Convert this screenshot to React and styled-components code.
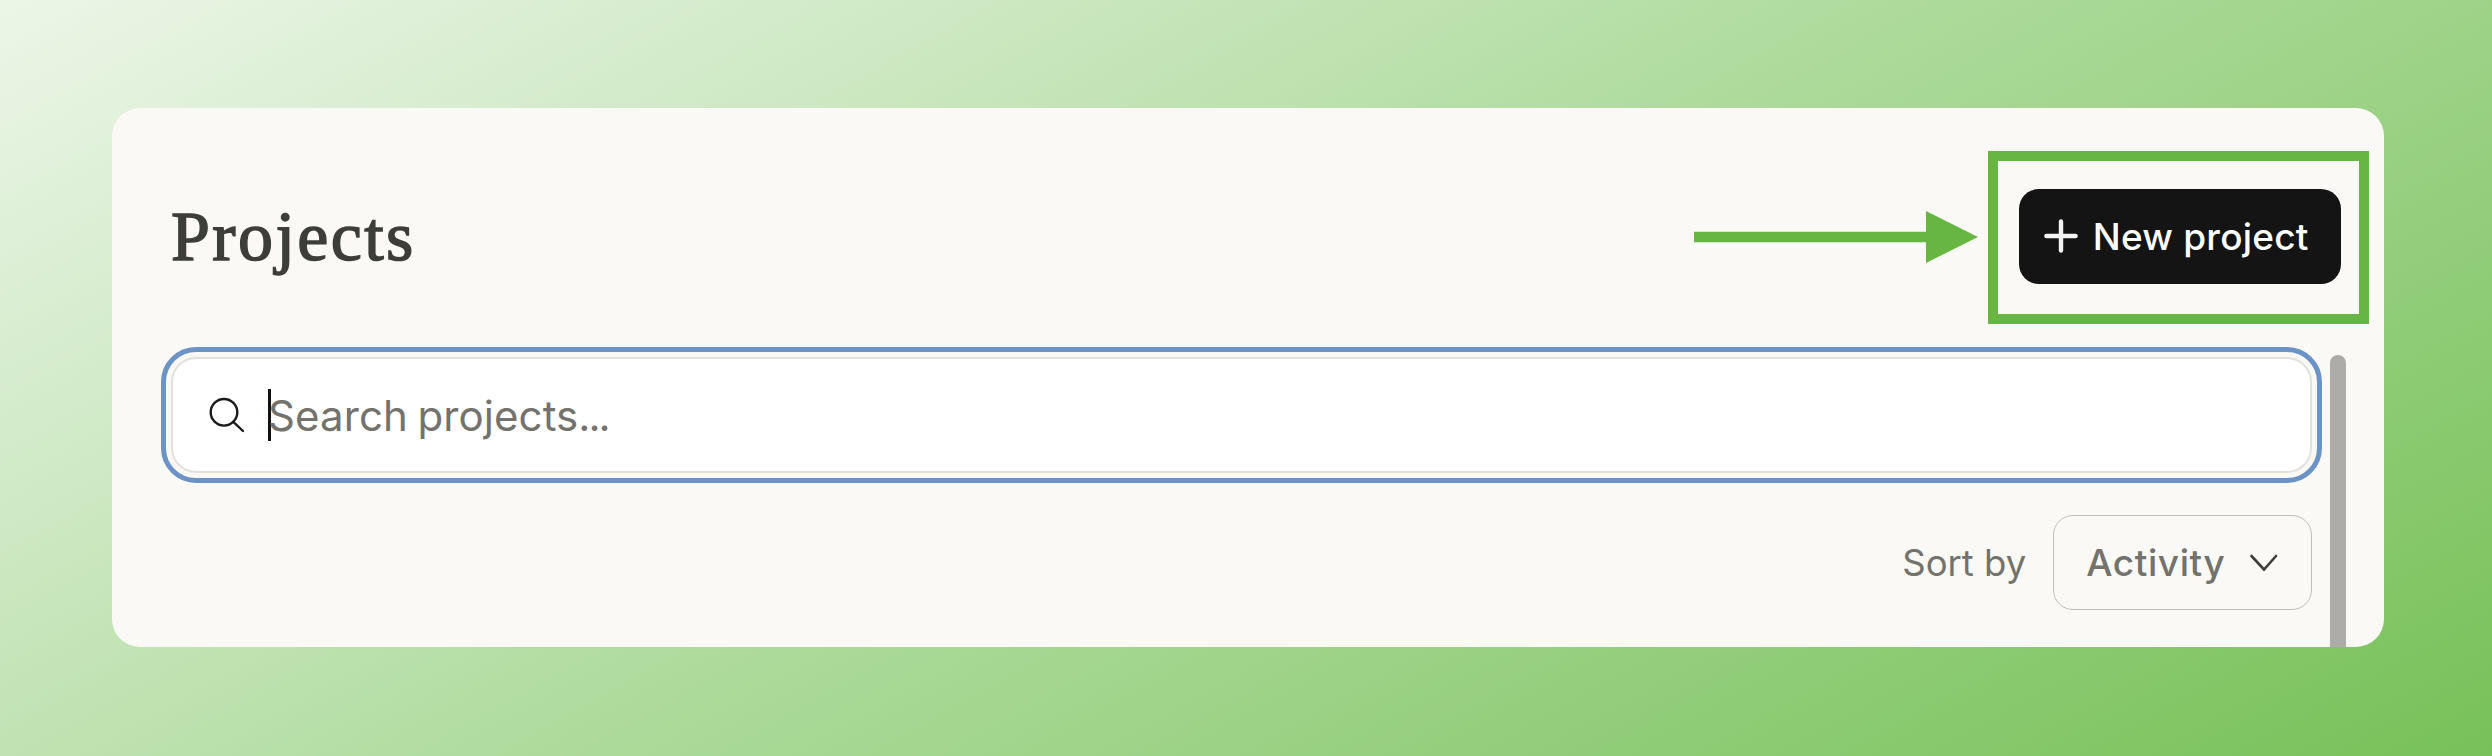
import React from 'react';
import styled, { createGlobalStyle } from 'styled-components';

const GlobalStyle = createGlobalStyle`
  * {
    box-sizing: border-box;
  }

  body {
    margin: 0;
    font-family: Inter, 'Liberation Sans', sans-serif;
  }
`;

const Backdrop = styled.div`
  width: 2492px;
  height: 756px;
  padding: 107.5px 108px 109.5px 112px;
  background: linear-gradient(151deg, #ecf6e8 0%, #cfe9c5 24%, #acda9a 51%, #78c159 100%);
`;

const Card = styled.main`
  position: relative;
  height: 539px;
  overflow: hidden;
  border-radius: 28px;
  background: #faf9f5;
`;

const Header = styled.header`
  display: flex;
  align-items: center;
  height: 173.5px;
  margin-top: 43px;
  padding-right: 14.7px;
  padding-left: 59px;
`;

const Title = styled.h1`
  flex: 1;
  margin: 0;
  color: #3d3d3a;
  font-family: 'Liberation Serif', serif;
  font-size: 70px;
  font-weight: 400;
  letter-spacing: 2.4px;
  line-height: 80px;
  -webkit-text-stroke: 1.5px #3d3d3a;
`;

const Arrow = styled.svg`
  display: block;
  width: 284px;
  height: 52px;
  margin-right: 10px;
`;

const Highlight = styled.div`
  display: flex;
  align-items: center;
  justify-content: center;
  width: 381.6px;
  height: 173.4px;
  padding: 0 0 2px 3px;
  border: 10.4px solid #67b643;
`;

const NewButton = styled.button`
  display: flex;
  align-items: center;
  width: 321.4px;
  height: 95px;
  padding: 0 0 0 25px;
  border: 0;
  border-radius: 20px;
  background: #141414;
  color: #fff;
  font-family: inherit;
  font-size: 37px;
  font-weight: 500;
  letter-spacing: 0.2px;
  white-space: nowrap;

  svg {
    margin-right: 14.5px;
  }
`;

const Body = styled.section`
  width: 2140.8px;
  margin-left: 59px;
  padding-top: 33px;
`;

const SearchField = styled.div`
  display: flex;
  align-items: center;
  height: 116px;
  padding-left: 36px;
  border: 2px solid #e2e1de;
  border-radius: 25px;
  outline: 5.4px solid #6b93c5;
  outline-offset: 5px;
  background: #fff;
`;

const Caret = styled.span`
  width: 3px;
  height: 52.6px;
  margin-left: 23px;
  background: #111;
`;

const Placeholder = styled.span`
  margin-left: -3px;
  color: #73726c;
  font-size: 42px;
  letter-spacing: 0.1px;
  word-spacing: -2.5px;
`;

const Dots = styled.span`
  letter-spacing: -2px;
`;

const SortRow = styled.div`
  display: flex;
  align-items: center;
  justify-content: flex-end;
  margin-top: 42px;
  color: #73726c;
  font-size: 36.5px;
`;

const SortLabel = styled.span`
  margin-right: 27px;
`;

const Select = styled.button`
  display: flex;
  align-items: center;
  justify-content: space-between;
  width: 258.6px;
  height: 95px;
  padding: 0 33px 0 32px;
  border: 1.5px solid #bfbeba;
  border-radius: 20px;
  background: transparent;
  color: inherit;
  font-family: inherit;
  font-size: 37px;
  font-weight: 500;
  letter-spacing: 0.6px;
`;

const Scrollbar = styled.div`
  position: absolute;
  top: 247px;
  right: 38px;
  bottom: 0;
  width: 16px;
  border-radius: 8px 8px 0 0;
  background: #adaca9;
`;

const PlusIcon = () => (
  <svg width="34" height="34" viewBox="0 0 34 34" fill="none">
    <path d="M17 2.4v29.2M2.4 17h29.2" stroke="#f4f4f4" strokeWidth="4.4" strokeLinecap="round" />
  </svg>
);

const SearchIcon = () => (
  <svg width="36" height="36" viewBox="0 0 36 36" fill="none" stroke="#1a1a1a" strokeWidth="2.4">
    <circle cx="15" cy="15.3" r="13.3" />
    <path d="M24.3 24.8L34 34" strokeLinecap="round" />
  </svg>
);

const ChevronIcon = () => (
  <svg width="28" height="18" viewBox="0 0 28 18" fill="none">
    <path d="M1.5 2L14 15.5 26 2" stroke="#3d3d3a" strokeWidth="2.6" strokeLinecap="round" />
  </svg>
);

export default function App() {
  return (
    <Backdrop>
      <GlobalStyle />
      <Card>
        <Header>
          <Title>Projects</Title>
          <Arrow viewBox="0 0 284 52" fill="#67b643">
            <path d="M0 20.8h232V0l52 26-52 26V31.2H0z" />
          </Arrow>
          <Highlight>
            <NewButton type="button">
              <PlusIcon />
              New project
            </NewButton>
          </Highlight>
        </Header>
        <Body>
          <SearchField>
            <SearchIcon />
            <Caret />
            <Placeholder>
              Search projects<Dots>...</Dots>
            </Placeholder>
          </SearchField>
          <SortRow>
            <SortLabel>Sort by</SortLabel>
            <Select type="button">
              Activity
              <ChevronIcon />
            </Select>
          </SortRow>
        </Body>
        <Scrollbar />
      </Card>
    </Backdrop>
  );
}
